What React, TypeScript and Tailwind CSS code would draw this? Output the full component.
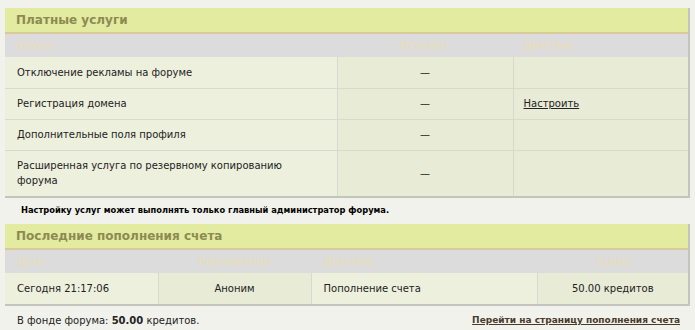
const FONT = { fontFamily: '"DejaVu Sans", Verdana, sans-serif' };

const services = [
  { name: "Отключение рекламы на форуме", action: "" },
  { name: "Регистрация домена", action: "Настроить" },
  { name: "Дополнительные поля профиля", action: "" },
  { name: "Расширенная услуга по резервному копированию форума", action: "" },
];

function PanelHead({ title }: { title: string }) {
  return (
    <div className="h-[26px] bg-[#e2eb9f] border-b-2 border-[#d8cb98] pl-[11px] flex items-center">
      <h2 className="text-[12px] font-bold text-[#8c8a52] leading-none">{title}</h2>
    </div>
  );
}

export default function App() {
  return (
    <div className="w-[695px] h-[330px] bg-[#f2f2ec] text-[10px] text-[#222] overflow-hidden pt-[8px] px-[5px]" style={FONT}>
      {/* Платные услуги */}
      <div className="border-r-2 border-b-2 border-[#c4c4bc]">
        <PanelHead title="Платные услуги" />
        <table className="w-full border-collapse">
          <thead>
            <tr className="h-[23px] bg-[#dcdcdc] text-[#e9dcb4]">
              <th className="font-normal text-left pl-[12px] w-[332px]">Услуга</th>
              <th className="font-normal text-center w-[176px]">Истекает</th>
              <th className="font-normal text-left pl-[10px]">Действие</th>
            </tr>
          </thead>
          <tbody>
            {services.map((s, i) => (
              <tr key={s.name} className={`${i === 3 ? "h-[46px]" : "h-[31px]"} ${i > 0 ? "border-t border-[#dad9d0]" : ""}`}>
                <td className="bg-[#edf0dd] pl-[12px] leading-[15px]">
                  <span className="block max-w-[280px]">{s.name}</span>
                </td>
                <td className="bg-[#e8ebd5] border-l border-[#dad9d0] text-center">—</td>
                <td className="bg-[#e8ebd5] border-l border-[#dad9d0] pl-[10px]">
                  {s.action && <a href="#" className="underline text-[#222]">{s.action}</a>}
                </td>
              </tr>
            ))}
          </tbody>
        </table>
      </div>
      <p className="text-[8.3px] font-bold text-black pl-[16px] mt-[6px] h-[17px]">
        Настройку услуг может выполнять только главный администратор форума.
      </p>

      {/* Последние пополнения счета */}
      <div className="mt-[3px] border-r-2 border-b-2 border-[#c4c4bc]">
        <PanelHead title="Последние пополнения счета" />
        <table className="w-full border-collapse">
          <thead>
            <tr className="h-[23px] bg-[#dcdcdc] text-[#e9dcb4]">
              <th className="font-normal text-left pl-[12px] w-[153px]">Дата</th>
              <th className="font-normal text-center w-[153px]">Пользователь</th>
              <th className="font-normal text-left pl-[12px] w-[226px]">Действие</th>
              <th className="font-normal text-center">Сумма</th>
            </tr>
          </thead>
          <tbody>
            <tr className="h-[31px]">
              <td className="bg-[#edf0dd] pl-[12px]">Сегодня 21:17:06</td>
              <td className="bg-[#e8ebd5] border-l border-[#dad9d0] text-center">Аноним</td>
              <td className="bg-[#edf0dd] border-l border-[#dad9d0] pl-[12px]">Пополнение счета</td>
              <td className="bg-[#e8ebd5] border-l border-[#dad9d0] text-center">50.00 кредитов</td>
            </tr>
          </tbody>
        </table>
      </div>
      <div className="flex justify-between items-center mt-[7px] pl-[12px] pr-[10px]">
        <span>
          В фонде форума: <b>50.00</b> кредитов.
        </span>
        <a href="#" className="text-[9px] font-bold underline text-[#4a3a2a]">
          Перейти на страницу пополнения счета
        </a>
      </div>
    </div>
  );
}
